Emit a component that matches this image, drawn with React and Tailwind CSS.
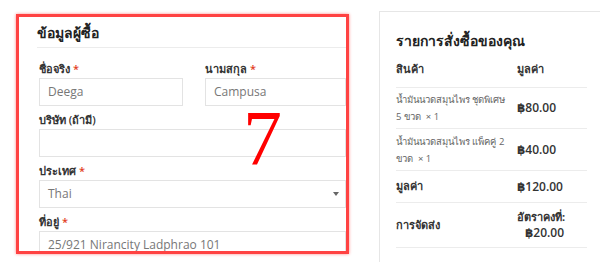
const font = { fontFamily: '"Open Sans", "Noto Sans", "DejaVu Sans", sans-serif' };

const Field = ({ label, required, value, select, className = "" }) => (
  <div className={className}>
    <div className="h-[16px] text-[11px] leading-[16px] font-semibold text-[#333]">
      {label}
      {required && <span className="text-[#e2401c] ml-[3px]">*</span>}
    </div>
    <div className="mt-[1px] h-[28px] border border-[#e3e3e3] bg-white flex items-center pl-[8px] pr-[6px] text-[12px] text-[#777]">
      <span className="flex-1 whitespace-nowrap">{value}</span>
      {select && (
        <span className="w-0 h-0 border-l-[3px] border-r-[3px] border-t-[4px] border-l-transparent border-r-transparent border-t-[#666]" />
      )}
    </div>
  </div>
);

const Row = ({ children, className = "" }) => (
  <div className={"flex items-center border-b border-[#ececec] " + className}>{children}</div>
);

const App = () => {
  return (
    <div className="w-[600px] h-[262px] overflow-hidden bg-white flex items-start" style={font}>
      {/* billing form */}
      <div className="relative shrink-0 ml-[16px] mt-[14px] w-[333px] h-[240px] border-[3px] border-[#ff4242] shadow-[0_0_3px_#ff8a8a] overflow-hidden">
        <div className="pl-[18px] pt-[6px]">
          <h3 className="text-[14px] leading-[20px] font-bold text-[#222]">ข้อมูลผู้ซื้อ</h3>
          <div className="mt-[4px] border-t border-[#ececec]" />
        </div>
        <div className="pl-[20px] pt-[13px] flex flex-col gap-[6px]">
          <div className="flex gap-[22px]">
            <Field className="w-[144px]" label="ชื่อจริง" required value="Deega" />
            <Field className="flex-1" label="นามสกุล" required value="Campusa" />
          </div>
          <Field label="บริษัท (ถ้ามี)" value="" />
          <Field label="ประเทศ" required value="Thai" select />
          <Field label="ที่อยู่" required value="25/921 Nirancity Ladphrao 101" />
        </div>
        <span
          className="absolute left-[224px] top-[82px] text-[78px] leading-none text-[#ff0000]"
          style={{ fontFamily: '"Liberation Serif", serif' }}
        >
          7
        </span>
      </div>

      {/* order review */}
      <div className="shrink-0 ml-[30px] mt-[11px] w-[240px] h-[260px] border border-[#e6e6e6] pl-[16px] pt-[19px]">
        <h3 className="text-[14px] leading-[20px] font-bold text-[#222]">รายการสั่งซื้อของคุณ</h3>
        <div className="w-[191px] text-[11px]">
          <Row className="h-[37px] font-bold text-[#333]">
            <div className="w-[121px] shrink-0">สินค้า</div>
            <div>มูลค่า</div>
          </Row>
          <Row className="h-[41px]">
            <div className="w-[121px] shrink-0 text-[9.5px] text-[#666] leading-[17px] whitespace-nowrap">
              <div>น้ำมันนวดสมุนไพร ชุดพิเศษ</div>
              <div>5 ขวด&nbsp; × 1</div>
            </div>
            <div className="text-[12px] font-semibold text-[#333]">฿80.00</div>
          </Row>
          <Row className="h-[42px]">
            <div className="w-[121px] shrink-0 text-[9.5px] text-[#666] leading-[17px] whitespace-nowrap">
              <div>น้ำมันนวดสมุนไพร แพ็คคู่ 2</div>
              <div>ขวด&nbsp; × 1</div>
            </div>
            <div className="text-[12px] font-semibold text-[#333]">฿40.00</div>
          </Row>
          <Row className="h-[32px] font-bold text-[#333]">
            <div className="w-[121px] shrink-0">มูลค่า</div>
            <div className="text-[12px] font-semibold">฿120.00</div>
          </Row>
          <Row className="h-[45px] font-bold text-[#333]">
            <div className="w-[121px] shrink-0">การจัดส่ง</div>
            <div className="leading-[16px]">
              <div>อัตราคงที่:</div>
              <div className="pl-[8px] text-[12px] font-semibold">฿20.00</div>
            </div>
          </Row>
          <Row className="h-[30px] font-bold text-[#333] items-end">
            <div className="w-[121px] shrink-0"></div>
            <div className="text-[12px] font-semibold translate-y-[4px]">฿140.00</div>
          </Row>
        </div>
      </div>
    </div>
  );
};

export default App;
